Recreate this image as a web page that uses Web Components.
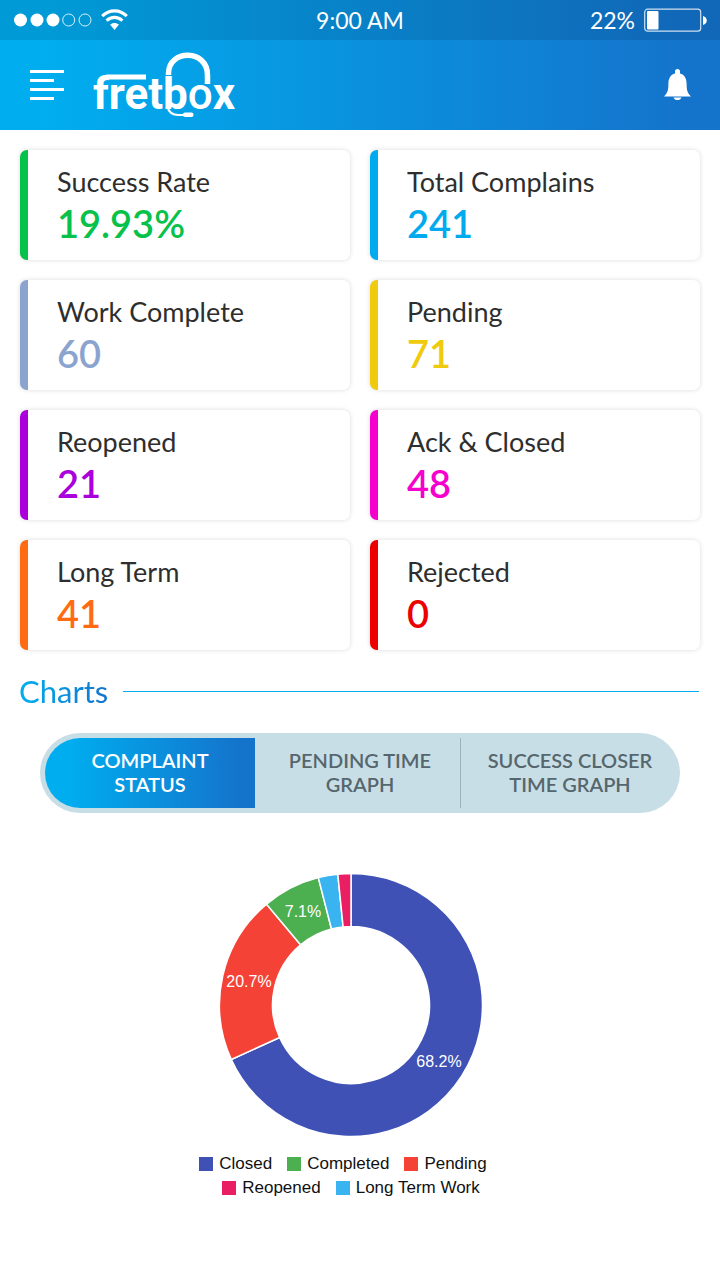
<!DOCTYPE html>
<html lang="en">
<head>
<meta charset="utf-8">
<meta name="viewport" content="width=device-width, initial-scale=1">
<title>Fretbox</title>
<style>
  body { margin: 0; background: #fff; color: #2e2e2e; font-family: Lato, "Open Sans", sans-serif; }
</style>
</head>
<body>
<fret-app></fret-app>

<script>
const define = (name, html, setup) => {
  const template = document.createElement('template');
  template.innerHTML = html;
  customElements.define(name, class extends HTMLElement {
    connectedCallback() {
      if (this.shadowRoot) return;
      this.attachShadow({ mode: 'open' }).append(template.content.cloneNode(true));
      if (setup) setup(this, this.shadowRoot);
    }
  });
};

define('status-bar', `
<style>
  :host { display: grid; grid-template-columns: 1fr auto 1fr; align-items: center; height: 40px; padding: 0 13px; box-sizing: border-box; background: rgba(0,20,40,.12); color: #fff; font-size: 23px; line-height: 40px; }
  svg { display: block; }
  .left, .right { display: flex; align-items: center; }
  .left { gap: 9px; }
  .right { gap: 9px; justify-content: flex-end; }
</style>
<div class="left">
  <svg width="79" height="14" viewBox="0 0 79 14" fill="#fff" aria-label="Signal">
    <circle cx="7.5" cy="7" r="6.5"/><circle cx="24" cy="7" r="6.5"/><circle cx="40" cy="7" r="6.5"/>
    <g fill="none" stroke="#fff" stroke-width="1" opacity=".85"><circle cx="55.7" cy="7" r="6"/><circle cx="72" cy="7" r="6"/></g>
  </svg>
  <svg width="27" height="22" viewBox="0 0 27 22" fill="none" stroke="#fff" stroke-width="3.2" aria-label="Wi-Fi">
    <path d="M1.2 7.2C8.3.2 18.7.2 25.8 7.2"/><path d="M5.6 11.600c4.600-4.300 11.200-4.300 15.800 0"/>
    <path d="M9 15.600c2.700-2.300 6.300-2.300 9 0L13.500 21z" fill="#fff" stroke="none"/>
  </svg>
</div>
<div>9:00 AM</div>
<div class="right"><span>22%</span>
  <svg width="63" height="24" viewBox="0 0 63 24" aria-label="Battery">
    <rect x=".7" y="1.2" width="56" height="22" rx="3" fill="none" stroke="#fff" stroke-width="1.2" opacity=".8"/>
    <rect x="3" y="3" width="11.5" height="18.5" rx="1" fill="#fff"/>
    <path d="M59 8c5 1 5 8 0 9z" fill="#fff"/>
  </svg>
</div>`);

define('fret-logo', `
<style>
  :host { display: block; }
  svg { display: block; overflow: visible; }
  text { font-family: Roboto, "Liberation Sans", sans-serif; font-weight: 700; font-size: 44px; }
  .thin { font-weight: 500; }
</style>
<svg width="144" height="68" viewBox="92 50 144 68" fill="#fff" role="img" aria-label="fretbox">
  <text x="93" y="108">fret<tspan>b</tspan><tspan class="thin">o</tspan>x</text>
  <path d="M106 76h40" fill="none" stroke="#fff" stroke-width="5"/>
  <path d="M168.500 74V72C169 48 207.500 48 207.500 74v9" fill="none" stroke="#fff" stroke-width="5.5"/>
  <path d="M167.500 106q2 8 11 8h7" fill="none" stroke="#fff" stroke-width="2.2"/>
  <rect x="183" y="111.5" width="10.5" height="4.5" rx="2"/>
</svg>`);

define('app-header', `
<style>
  :host { display: block; background: linear-gradient(90deg, #00aeef 5%, #1474cc 95%); }
  .bar { display: flex; align-items: center; height: 90px; padding: 0 29px 0 30px; gap: 28px; }
  button { border: 0; background: none; padding: 0; margin: 0; display: block; cursor: pointer; }
  svg { display: block; }
  .bell { margin-left: auto; }
</style>
<status-bar></status-bar>
<div class="bar">
  <button aria-label="Menu"><svg width="34" height="30" viewBox="0 0 34 30" fill="#fff"><path d="M0 0h34v3H0zM0 9h24v3H0zM0 18h34v3H0zM0 27h24v3H0z"/></svg></button>
  <fret-logo></fret-logo>
  <button class="bell" aria-label="Notifications"><svg width="27" height="32" viewBox="0 0 27 32" fill="#fff"><path d="M13.500 0a2.500 2.500 0 0 1 2.500 2.500V4.500c4.500 1.200 6.500 5 6.600 10 .1 6.500.5 9 4.400 13H0c3.900-4 4.300-6.500 4.400-13C4.500 9.500 6.500 5.700 11 4.500V2.500A2.500 2.500 0 0 1 13.500 0zM9.500 28.500h8c-1 3.400-7 3.400-8 0z"/></svg></button>
</div>`);

define('stat-card', `
<style>
  :host { display: block; box-sizing: border-box; border-left: 8px solid var(--accent); border-radius: 7px; padding: 16px 12px 12px 29px; background: #fff; box-shadow: 0 0 5px rgba(0,0,0,.14); }
  .label { font-size: 27px; line-height: 32px; }
  .value { font-size: 38px; line-height: 50px; font-weight: 600; color: var(--accent); }
</style>
<div class="label"><slot></slot></div>
<div class="value"><slot name="value"></slot></div>`);

define('section-title', `
<style>
  :host { display: flex; align-items: center; gap: 15px; }
  h2 { margin: 0; font-size: 31px; line-height: 37px; font-weight: 400; background: linear-gradient(90deg, #00aeef, #1474cc); -webkit-background-clip: text; background-clip: text; color: transparent; }
  .rule { flex: 1; border-top: 1px solid #00aeef; padding-top: 0; }
</style>
<h2><slot></slot></h2><div class="rule"></div>`);

define('chart-tabs', `
<style>
  :host { display: grid; grid-template-columns: repeat(3, 1fr); padding: 5px; border-radius: 40px; background: #c8dee6; }
  button { position: relative; border: 0; margin: 0; padding: 0 0 2px; height: 70px; background: none; color: #56666d; font: 600 20px/24px Lato, sans-serif; cursor: pointer; }
  button:first-of-type { border-radius: 35px 0 0 35px; }
  button:last-of-type { border-radius: 0 35px 35px 0; }
  button[aria-selected="true"] { color: #fff; background: linear-gradient(90deg, #00aeef 10%, #1474cc 92%); }
  button:last-of-type::before { content: ""; position: absolute; left: -5px; top: 0; bottom: 0; width: 1px; background: #9fb3bb; }
</style>
<button role="tab" aria-selected="true">COMPLAINT<br>STATUS</button>
<button role="tab" aria-selected="false">PENDING TIME<br>GRAPH</button>
<button role="tab" aria-selected="false">SUCCESS CLOSER<br>TIME GRAPH</button>`,
(host, root) => {
  host.setAttribute('role', 'tablist');
  const tabs = [...root.querySelectorAll('button')];
  tabs.forEach(tab => tab.addEventListener('click', () =>
    tabs.forEach(t => t.setAttribute('aria-selected', String(t === tab)))));
});

define('donut-chart', `
<style>
  :host { display: block; font-family: "Liberation Sans", Arial, sans-serif; }
  svg { display: block; margin: 0 auto; }
  text { font-size: 16px; fill: #fff; text-anchor: middle; }
  path { stroke: #fff; stroke-width: 1.5; }
</style>
<svg width="264" height="264" viewBox="-132 -132 264 264" role="img" aria-label="Complaint status"></svg>`,
(host, root) => {
  const svg = root.querySelector('svg');
  const outer = 131.5, inner = 78.5, mid = 105;
  const slices = [[68.2, '#3f51b5'], [20.7, '#f44336'], [7.1, '#4caf50'], [2.4, '#3ab4f0'], [1.6, '#e91e63']];
  const point = (r, share) => {
    const a = share / 100 * 2 * Math.PI;
    return [r * Math.sin(a), -r * Math.cos(a)];
  };
  let from = 0, shapes = '', labels = '';
  for (const [share, color] of slices) {
    const to = from + share, large = share > 50 ? 1 : 0;
    shapes += `<path fill="${color}" d="M${point(outer, from)}A${outer} ${outer} 0 ${large} 1 ${point(outer, to)}L${point(inner, to)}A${inner} ${inner} 0 ${large} 0 ${point(inner, from)}Z"/>`;
    if (share > 5) {
      const [x, y] = point(mid, from + share / 2);
      labels += `<text x="${Math.round(x)}" y="${Math.round(y) + 5}">${share}%</text>`;
    }
    from = to;
  }
  svg.innerHTML = shapes + labels;
});

define('legend-item', `
<style>
  :host { display: flex; align-items: center; gap: 6px; }
  i { width: 14px; height: 14px; background: var(--key); }
</style>
<i></i><span><slot></slot></span>`);

define('chart-legend', `
<style>
  :host { display: block; font: 17px/24px "Liberation Sans", Arial, sans-serif; color: #111; }
  div { display: flex; justify-content: center; gap: 15px; }
  .first { padding-right: 16px; }
</style>
<div class="first"><slot name="first"></slot></div>
<div><slot></slot></div>`);

define('fret-app', `
<style>
  :host { display: block; }
  .stats { display: grid; grid-template-columns: 1fr 1fr; gap: 20px; padding: 20px; }
  section-title { padding: 3px 21px 0 19px; }
  chart-tabs { margin: 23px 40px 60px; }
  .chart { padding: 0 18px 40px 0; }
  chart-legend { margin-top: 15px; }
</style>
<app-header></app-header>
<main>
  <div class="stats">
    <stat-card style="--accent:#06c14a">Success Rate<span slot="value">19.93%</span></stat-card>
    <stat-card style="--accent:#00aaef">Total Complains<span slot="value">241</span></stat-card>
    <stat-card style="--accent:#8ba4cf">Work Complete<span slot="value">60</span></stat-card>
    <stat-card style="--accent:#f0ca0c">Pending<span slot="value">71</span></stat-card>
    <stat-card style="--accent:#a900dc">Reopened<span slot="value">21</span></stat-card>
    <stat-card style="--accent:#f500cd">Ack &amp; Closed<span slot="value">48</span></stat-card>
    <stat-card style="--accent:#ff6b12">Long Term<span slot="value">41</span></stat-card>
    <stat-card style="--accent:#ec0000">Rejected<span slot="value">0</span></stat-card>
  </div>
  <section-title>Charts</section-title>
  <chart-tabs></chart-tabs>
  <div class="chart">
    <donut-chart></donut-chart>
    <chart-legend>
      <legend-item slot="first" style="--key:#3f51b5">Closed</legend-item>
      <legend-item slot="first" style="--key:#4caf50">Completed</legend-item>
      <legend-item slot="first" style="--key:#f44336">Pending</legend-item>
      <legend-item style="--key:#e91e63">Reopened</legend-item>
      <legend-item style="--key:#3ab4f0">Long Term Work</legend-item>
    </chart-legend>
  </div>
</main>`);
</script>
</body>
</html>
